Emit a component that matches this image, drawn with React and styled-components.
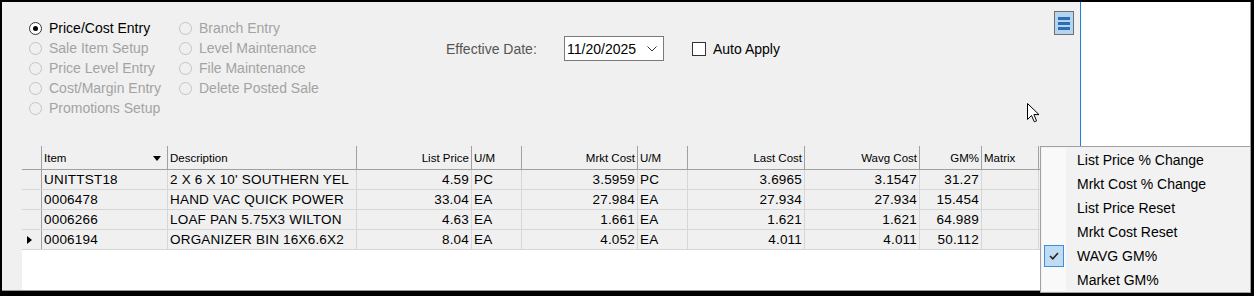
import React from "react";
import styled, { createGlobalStyle } from "styled-components";

const GlobalStyle = createGlobalStyle`
  html, body {
    margin: 0;
    padding: 0;
    background: #000;
  }
  * {
    box-sizing: border-box;
  }
`;

const leftRadios = [
  { label: "Price/Cost Entry", checked: true },
  { label: "Sale Item Setup" },
  { label: "Price Level Entry" },
  { label: "Cost/Margin Entry" },
  { label: "Promotions Setup" },
];

const rightRadios = [
  { label: "Branch Entry" },
  { label: "Level Maintenance" },
  { label: "File Maintenance" },
  { label: "Delete Posted Sale" },
];

const columns = [
  { key: "sel", title: "", width: 20 },
  { key: "item", title: "Item", width: 126, sort: true },
  { key: "desc", title: "Description", width: 189 },
  { key: "list", title: "List Price", width: 115, right: true },
  { key: "um1", title: "U/M", width: 50 },
  { key: "mrkt", title: "Mrkt Cost", width: 116, right: true },
  { key: "um2", title: "U/M", width: 50 },
  { key: "last", title: "Last Cost", width: 117, right: true },
  { key: "wavg", title: "Wavg Cost", width: 115, right: true },
  { key: "gm", title: "GM%", width: 62, right: true },
  { key: "matrix", title: "Matrix", width: 57 },
];

const rows = [
  ["UNITTST18", "2 X 6 X 10' SOUTHERN YEL", "4.59", "PC", "3.5959", "PC", "3.6965", "3.1547", "31.27", ""],
  ["0006478", "HAND VAC QUICK POWER", "33.04", "EA", "27.984", "EA", "27.934", "27.934", "15.454", ""],
  ["0006266", "LOAF PAN 5.75X3 WILTON", "4.63", "EA", "1.661", "EA", "1.621", "1.621", "64.989", ""],
  ["0006194", "ORGANIZER BIN 16X6.6X2", "8.04", "EA", "4.052", "EA", "4.011", "4.011", "50.112", ""],
];

const menuItems = [
  { label: "List Price % Change" },
  { label: "Mrkt Cost % Change" },
  { label: "List Price Reset" },
  { label: "Mrkt Cost Reset" },
  { label: "WAVG GM%", checked: true },
  { label: "Market GM%" },
];

const gridTemplate = columns.map((c) => `${c.width}px`).join(" ") + " 1fr";

export default function App() {
  return (
    <>
      <GlobalStyle />
      <Frame>
        <Inner>
          <Main>
            <Top>
              <RadioBlock>
                <RadioColumn>
                  {leftRadios.map((r) => (
                    <RadioRow key={r.label} $disabled={!r.checked}>
                      <RadioCircle $checked={r.checked} $disabled={!r.checked} />
                      {r.label}
                    </RadioRow>
                  ))}
                </RadioColumn>
                <RadioColumn>
                  {rightRadios.map((r) => (
                    <RadioRow key={r.label} $disabled>
                      <RadioCircle $disabled />
                      {r.label}
                    </RadioRow>
                  ))}
                </RadioColumn>
              </RadioBlock>
              <DateRow>
                <DateLabel>Effective Date:</DateLabel>
                <DateBox>
                  11/20/2025
                  <svg width="10" height="6" viewBox="0 0 10 6">
                    <polyline points="0.5,0.5 5,5 9.5,0.5" fill="none" stroke="#333" strokeWidth="1" />
                  </svg>
                </DateBox>
                <CheckBox />
                <CheckLabel>Auto Apply</CheckLabel>
              </DateRow>
              <MenuButton>
                <Bar />
                <Bar />
                <Bar />
              </MenuButton>
            </Top>
            <GridArea>
              <Grid>
                <HeaderRow>
                  {columns.map((c) => (
                    <HeaderCell key={c.key} $right={c.right}>
                      {c.title}
                      {c.sort && <SortArrow />}
                    </HeaderCell>
                  ))}
                  <HeaderCell />
                </HeaderRow>
                {rows.map((r, i) => (
                  <DataRow key={r[0]}>
                    <SelectorCell>{i === rows.length - 1 && <RowPointer />}</SelectorCell>
                    {r.map((v, j) => (
                      <Cell key={j} $right={columns[j + 1].right}>
                        {v}
                      </Cell>
                    ))}
                    <Cell />
                  </DataRow>
                ))}
              </Grid>
            </GridArea>
          </Main>
          <Divider />
          <Side />
        </Inner>
        <Cursor width="13" height="20" viewBox="0 0 13 20">
          <path
            d="M0.5,0.5 L0.5,16.5 L4.5,12.5 L7.3,18.8 L9.6,17.8 L6.9,11.6 L12,11.6 Z"
            fill="#fff"
            stroke="#000"
            strokeWidth="1"
            strokeLinejoin="miter"
          />
        </Cursor>
        <ContextMenu>
          <Gutter />
          {menuItems.map((m) => (
            <MenuItem key={m.label}>
              {m.checked && (
                <CheckMark>
                  <svg width="10" height="8" viewBox="0 0 10 8">
                    <polyline points="1,4 3.8,6.8 9,1" fill="none" stroke="#222" strokeWidth="1.6" />
                  </svg>
                </CheckMark>
              )}
              {m.label}
            </MenuItem>
          ))}
        </ContextMenu>
      </Frame>
    </>
  );
}

const Frame = styled.div`
  position: relative;
  width: 1254px;
  height: 296px;
  background: #000;
  padding: 2px 3px 5px 2px;
`;

const Inner = styled.div`
  display: flex;
  width: 100%;
  height: 100%;
  border-right: 1px solid #9a9a9a;
  border-bottom: 1px solid #9a9a9a;
  background: #f0f0f0;
`;

const Main = styled.div`
  width: 1078px;
  display: flex;
  flex-direction: column;
  background: #f0f0f0;
`;

const Top = styled.div`
  height: 144px;
  display: flex;
  align-items: flex-start;
  padding: 9px 0 0 27px;
  font-family: "Liberation Sans", Arial, sans-serif;
  font-size: 14px;
`;

const RadioBlock = styled.div`
  display: flex;
  width: 417px;
  margin-top: 7px;
`;

const RadioColumn = styled.div`
  display: flex;
  flex-direction: column;
  width: 150px;
`;

const RadioRow = styled.div`
  display: flex;
  align-items: center;
  height: 20px;
  gap: 7px;
  color: ${(p) => (p.$disabled ? "#a3a3a3" : "#000")};
  white-space: nowrap;
`;

const RadioCircle = styled.span`
  position: relative;
  width: 13px;
  height: 13px;
  border-radius: 50%;
  border: 1px solid ${(p) => (p.$disabled ? "#c4c4c4" : "#333")};
  background: ${(p) => (p.$disabled ? "#f0f0f0" : "#fff")};
  flex-shrink: 0;

  &::after {
    content: "";
    display: ${(p) => (p.$checked ? "block" : "none")};
    position: absolute;
    left: 3px;
    top: 3px;
    width: 5px;
    height: 5px;
    border-radius: 50%;
    background: #000;
  }
`;

const DateRow = styled.div`
  display: flex;
  align-items: center;
  margin-top: 25px;
`;

const DateLabel = styled.span`
  width: 118px;
  color: #555;
`;

const DateBox = styled.div`
  width: 100px;
  height: 25px;
  border: 1px solid #7a7a7a;
  background: #fff;
  display: flex;
  align-items: center;
  justify-content: space-between;
  padding: 0 6px 0 2px;
  color: #000;

  svg {
    margin-top: 1px;
  }
`;

const CheckBox = styled.span`
  width: 14px;
  height: 14px;
  margin-left: 28px;
  border: 1px solid #333;
  background: #fff;
`;

const CheckLabel = styled.span`
  margin-left: 7px;
  color: #000;
`;

const MenuButton = styled.div`
  margin-left: auto;
  margin-right: 6px;
  width: 20px;
  height: 24px;
  border: 1px solid #6f6f6f;
  background: #b3d5f2;
  display: flex;
  flex-direction: column;
  align-items: center;
  justify-content: center;
  gap: 2px;
`;

const Bar = styled.span`
  width: 12px;
  height: 3px;
  background: #2f6db3;
`;

const GridArea = styled.div`
  flex: 1;
  padding-left: 20px;
  display: flex;
`;

const Grid = styled.div`
  flex: 1;
  background: #fff;
  font-family: "Liberation Sans", Arial, sans-serif;
`;

const HeaderRow = styled.div`
  display: grid;
  grid-template-columns: ${gridTemplate};
  height: 24px;
  background: #f0f0f0;
  border-bottom: 1px solid #a0a0a0;
`;

const HeaderCell = styled.div`
  position: relative;
  display: flex;
  align-items: center;
  justify-content: ${(p) => (p.$right ? "flex-end" : "flex-start")};
  padding: 0 ${(p) => (p.$right ? "2px" : "0")} 0 2px;
  border-right: 1px solid #a0a0a0;
  font-size: 11.5px;
  color: #000;
  white-space: nowrap;
`;

const SortArrow = styled.span`
  position: absolute;
  right: 6px;
  top: 10px;
  width: 0;
  height: 0;
  border-left: 4px solid transparent;
  border-right: 4px solid transparent;
  border-top: 5px solid #000;
`;

const DataRow = styled.div`
  display: grid;
  grid-template-columns: ${gridTemplate};
  height: 20px;
  background: #f0f0f0;
  border-bottom: 1px solid #d6d6d6;
`;

const Cell = styled.div`
  display: flex;
  align-items: center;
  justify-content: ${(p) => (p.$right ? "flex-end" : "flex-start")};
  padding: 0 ${(p) => (p.$right ? "2px" : "0")} 0 2px;
  border-right: 1px solid #d6d6d6;
  font-size: 13.5px;
  letter-spacing: 0.2px;
  color: #000;
  white-space: nowrap;
  overflow: hidden;
`;

const SelectorCell = styled.div`
  display: flex;
  align-items: center;
  padding-left: 5px;
  border-right: 1px solid #a0a0a0;
`;

const RowPointer = styled.span`
  width: 0;
  height: 0;
  border-top: 4px solid transparent;
  border-bottom: 4px solid transparent;
  border-left: 5px solid #000;
`;

const Divider = styled.div`
  width: 1px;
  background: #1e7fd8;
`;

const Side = styled.div`
  flex: 1;
  background: #fff;
`;

const Cursor = styled.svg`
  position: absolute;
  left: 1027px;
  top: 103px;
`;

const ContextMenu = styled.div`
  position: absolute;
  left: 1040px;
  top: 146px;
  width: 211px;
  height: 147px;
  padding: 1px 0 0 1px;
  border: 1px solid #a0a0a0;
  background: #f2f2f2;
  font-family: "Liberation Sans", Arial, sans-serif;
  font-size: 14px;
  color: #000;
`;

const Gutter = styled.div`
  position: absolute;
  left: 1px;
  top: 1px;
  bottom: 1px;
  width: 24px;
  background: #f9f9f9;
`;

const MenuItem = styled.div`
  position: relative;
  height: 24px;
  display: flex;
  align-items: center;
  padding-left: 35px;
`;

const CheckMark = styled.span`
  position: absolute;
  left: 2px;
  top: 1px;
  width: 20px;
  height: 22px;
  border: 1px solid #3c8fde;
  background: #c0dcf3;
  display: flex;
  align-items: center;
  justify-content: center;
`;
